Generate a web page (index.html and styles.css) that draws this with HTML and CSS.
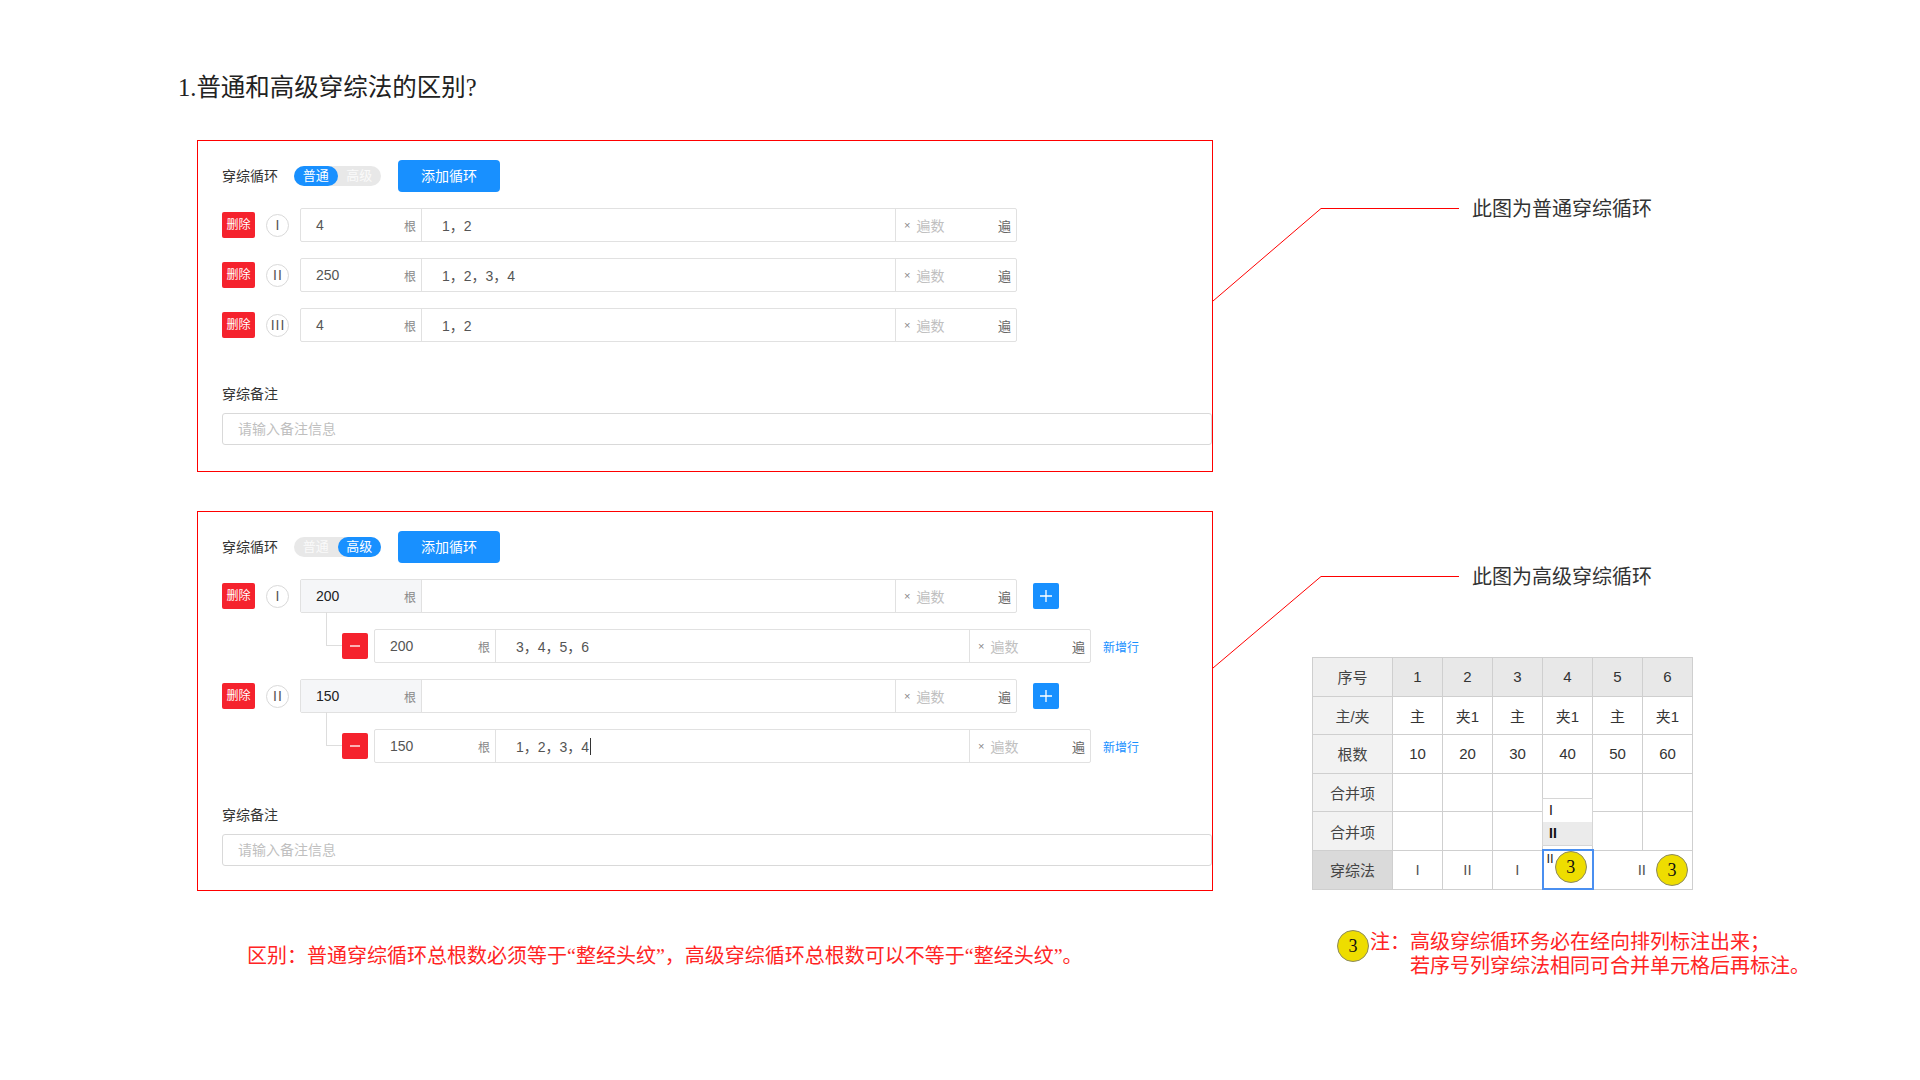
FILE: index.html
```html
<!DOCTYPE html>
<html lang="zh-CN">
<head>
    <meta charset="UTF-8">
    <meta name="viewport" content="width=device-width, initial-scale=1.0">
    <link rel="stylesheet" href="styles.css">
</head>
<body>
    <div class="page">
        <h1 class="title">1.普通和高级穿综法的区别?</h1>

        <div class="layout">
            <div class="left">
                <!-- 普通穿综循环 -->
                <section class="panel">
                    <div class="toolbar">
                        <span class="label">穿综循环</span>
                        <div class="switch">
                            <span class="on">普通</span>
                            <span>高级</span>
                        </div>
                        <div class="add-btn">添加循环</div>
                    </div>

                    <div class="row">
                        <div class="del">删除</div>
                        <div class="num">I</div>
                        <div class="field">
                            <div class="count"><span class="val">4</span><span class="unit">根</span></div>
                            <div class="seq">1，2</div>
                            <div class="times"><span class="x">×</span><span class="ph">遍数</span><span class="unit">遍</span></div>
                        </div>
                    </div>
                    <div class="row">
                        <div class="del">删除</div>
                        <div class="num">II</div>
                        <div class="field">
                            <div class="count"><span class="val">250</span><span class="unit">根</span></div>
                            <div class="seq">1，2，3，4</div>
                            <div class="times"><span class="x">×</span><span class="ph">遍数</span><span class="unit">遍</span></div>
                        </div>
                    </div>
                    <div class="row">
                        <div class="del">删除</div>
                        <div class="num">III</div>
                        <div class="field">
                            <div class="count"><span class="val">4</span><span class="unit">根</span></div>
                            <div class="seq">1，2</div>
                            <div class="times"><span class="x">×</span><span class="ph">遍数</span><span class="unit">遍</span></div>
                        </div>
                    </div>

                    <div class="remark-label">穿综备注</div>
                    <div class="remark">请输入备注信息</div>
                </section>

                <!-- 高级穿综循环 -->
                <section class="panel">
                    <div class="toolbar">
                        <span class="label">穿综循环</span>
                        <div class="switch">
                            <span>普通</span>
                            <span class="on">高级</span>
                        </div>
                        <div class="add-btn">添加循环</div>
                    </div>

                    <div class="row">
                        <div class="del">删除</div>
                        <div class="num">I</div>
                        <div class="field">
                            <div class="count main"><span class="val">200</span><span class="unit">根</span></div>
                            <div class="seq"></div>
                            <div class="times"><span class="x">×</span><span class="ph">遍数</span><span class="unit">遍</span></div>
                        </div>
                        <div class="plus">
                            <svg width="26" height="26" viewBox="0 0 26 26"><path d="M13 7v12M7 13h12" stroke="#fff" stroke-width="1.3" fill="none"/></svg>
                        </div>
                    </div>
                    <div class="row sub">
                        <div class="elbow"></div>
                        <div class="minus">
                            <svg width="26" height="26" viewBox="0 0 26 26"><path d="M8 13h10" stroke="#fff" stroke-width="1.3" fill="none"/></svg>
                        </div>
                        <div class="field">
                            <div class="count"><span class="val">200</span><span class="unit">根</span></div>
                            <div class="seq">3，4，5，6</div>
                            <div class="times"><span class="x">×</span><span class="ph">遍数</span><span class="unit">遍</span></div>
                        </div>
                        <span class="new-line">新增行</span>
                    </div>

                    <div class="row">
                        <div class="del">删除</div>
                        <div class="num">II</div>
                        <div class="field">
                            <div class="count main"><span class="val">150</span><span class="unit">根</span></div>
                            <div class="seq"></div>
                            <div class="times"><span class="x">×</span><span class="ph">遍数</span><span class="unit">遍</span></div>
                        </div>
                        <div class="plus">
                            <svg width="26" height="26" viewBox="0 0 26 26"><path d="M13 7v12M7 13h12" stroke="#fff" stroke-width="1.3" fill="none"/></svg>
                        </div>
                    </div>
                    <div class="row sub">
                        <div class="elbow"></div>
                        <div class="minus">
                            <svg width="26" height="26" viewBox="0 0 26 26"><path d="M8 13h10" stroke="#fff" stroke-width="1.3" fill="none"/></svg>
                        </div>
                        <div class="field">
                            <div class="count"><span class="val">150</span><span class="unit">根</span></div>
                            <div class="seq">1，2，3，4<span class="caret"></span></div>
                            <div class="times"><span class="x">×</span><span class="ph">遍数</span><span class="unit">遍</span></div>
                        </div>
                        <span class="new-line">新增行</span>
                    </div>

                    <div class="remark-label">穿综备注</div>
                    <div class="remark">请输入备注信息</div>
                </section>

                <p class="diff">区别：普通穿综循环总根数必须等于“整经头纹”，高级穿综循环总根数可以不等于“整经头纹”。</p>
            </div>

            <div class="right">
                <div class="callout first">此图为普通穿综循环</div>
                <div class="callout second">此图为高级穿综循环</div>

                <table class="grid">
                    <colgroup>
                        <col class="c-head">
                        <col class="c-num"><col class="c-num"><col class="c-num">
                        <col class="c-num"><col class="c-num"><col class="c-num">
                    </colgroup>
                    <tr class="hd">
                        <th class="rh top">序号</th>
                        <th>1</th><th>2</th><th>3</th><th>4</th><th>5</th><th>6</th>
                    </tr>
                    <tr>
                        <th class="rh">主/夹</th>
                        <td>主</td><td>夹1</td><td>主</td><td>夹1</td><td>主</td><td>夹1</td>
                    </tr>
                    <tr>
                        <th class="rh">根数</th>
                        <td>10</td><td>20</td><td>30</td><td>40</td><td>50</td><td>60</td>
                    </tr>
                    <tr>
                        <th class="rh">合并项</th>
                        <td></td><td></td><td></td>
                        <td class="has-menu">
                            <div class="menu">
                                <div class="opt">I</div>
                                <div class="opt cur">II</div>
                            </div>
                        </td>
                        <td></td><td></td>
                    </tr>
                    <tr>
                        <th class="rh">合并项</th>
                        <td></td><td></td><td></td><td></td><td></td><td></td>
                    </tr>
                    <tr>
                        <th class="rh dark">穿综法</th>
                        <td class="mark">I</td>
                        <td class="mark">II</td>
                        <td class="mark">I</td>
                        <td class="sel">
                            <div class="sel-inner"><span class="mark-sm">II</span><span class="badge">3</span></div>
                        </td>
                        <td colspan="2" class="merged">
                            <div class="merged-inner"><span class="mark">II</span><span class="badge">3</span></div>
                        </td>
                    </tr>
                </table>

                <div class="note">
                    <span class="badge">3</span>
                    <div class="note-text">
                        <p>注：高级穿综循环务必在经向排列标注出来；</p>
                        <p class="indent">若序号列穿综法相同可合并单元格后再标注。</p>
                    </div>
                </div>
            </div>
        </div>

        <!-- 引线 -->
        <svg class="leaders" width="1920" height="1080" viewBox="0 0 1920 1080">
            <polyline points="1213,301 1321,208.5 1459,208.5" fill="none" stroke="#ff0000" stroke-width="1"/>
            <polyline points="1213,668 1321,576.5 1459,576.5" fill="none" stroke="#ff0000" stroke-width="1"/>
        </svg>
    </div>
</body>
</html>
```

FILE: styles.css
```css
* {
    box-sizing: border-box;
}

body {
    margin: 0;
    background: #fff;
}

.page {
    position: relative;
    width: 1920px;
    height: 1080px;
    overflow: hidden;
    font-family: "Liberation Sans", "Noto Sans CJK SC", sans-serif;
    color: #333;
}

.title {
    margin: 0;
    padding: 72px 0 0 178px;
    font: normal 24.5px/31px "Liberation Serif", "Noto Sans CJK SC", serif;
    color: #222;
}

.layout {
    display: grid;
    grid-template-columns: 1016px 1fr;
    column-gap: 99px;
    margin-top: 37px;
    padding-left: 197px;
}

/* 面板 */
.panel {
    border: 1px solid #ff0000;
    padding: 19px 0 24px 24px;
    overflow: hidden;
}

.panel:first-child {
    padding-bottom: 26px;
}

.panel + .panel {
    margin-top: 39px;
}

.toolbar {
    display: flex;
    align-items: center;
    height: 32px;
}

.label {
    font-size: 14px;
    line-height: 20px;
    color: #333;
}

.switch {
    display: flex;
    width: 87px;
    height: 20px;
    margin-left: 16px;
    border-radius: 10px;
    background: #e8e8e8;
}

.switch span {
    width: 44px;
    font-size: 13px;
    line-height: 20px;
    text-align: center;
    color: #fafafa;
    border-radius: 10px;
}

.switch .on {
    background: #1890ff;
    color: #fff;
}

.add-btn {
    width: 102px;
    height: 32px;
    margin-left: 17px;
    border-radius: 4px;
    background: #1890ff;
    color: #fff;
    font-size: 14px;
    line-height: 32px;
    text-align: center;
}

/* 循环行 */
.row {
    display: flex;
    align-items: center;
    height: 34px;
    margin-top: 16px;
}

.del {
    width: 33px;
    height: 26px;
    border-radius: 2px;
    background: #f5222d;
    color: #fff;
    font-size: 12px;
    line-height: 26px;
    text-align: center;
}

.num {
    display: flex;
    align-items: center;
    justify-content: center;
    width: 23px;
    height: 23px;
    margin-left: 11px;
    border: 1px solid #d9d9d9;
    border-radius: 50%;
    font-size: 14px;
    color: #555;
    letter-spacing: 1px;
    padding-left: 1px;
}

.field {
    display: flex;
    width: 717px;
    height: 34px;
    margin-left: 11px;
    border: 1px solid #e1e1e1;
    border-radius: 2px;
}

.count {
    display: flex;
    align-items: center;
    width: 120px;
    padding: 0 5px 0 15px;
}

.count.main {
    background: #f5f6f8;
}

.count .val {
    flex: 1;
    font-size: 14px;
    color: #555;
}

.count.main .val {
    color: #222;
}

.count .unit {
    font-size: 12px;
    color: #888;
}

.seq {
    display: flex;
    align-items: center;
    flex: 1;
    padding-left: 20px;
    border-left: 1px solid #e1e1e1;
    font-size: 14px;
    color: #555;
}

.caret {
    display: inline-block;
    width: 1px;
    height: 17px;
    margin-left: 1px;
    background: #333;
}

.times {
    display: flex;
    align-items: center;
    width: 121px;
    padding: 0 5px 0 8px;
    border-left: 1px solid #e1e1e1;
}

.times .x {
    font-size: 11px;
    color: #888;
}

.times .ph {
    flex: 1;
    margin-left: 6px;
    font-size: 14px;
    color: #c0c0c0;
}

.times .unit {
    font-size: 13px;
    color: #666;
}

.plus,
.minus {
    width: 26px;
    height: 26px;
    border-radius: 2px;
}

.plus {
    margin-left: 16px;
    background: #1890ff;
}

.minus {
    background: #f5222d;
}

.plus svg,
.minus svg {
    display: block;
}

.sub {
    padding-left: 104px;
}

.sub .field {
    margin-left: 6px;
}

.elbow {
    align-self: flex-start;
    width: 16px;
    height: 34px;
    margin-top: -17px;
    border-left: 1px solid #ddd;
    border-bottom: 1px solid #ddd;
}

.new-line {
    margin-left: 12px;
    font-size: 12px;
    color: #1890ff;
}

.remark-label {
    margin-top: 42px;
    font-size: 14px;
    line-height: 20px;
    color: #333;
}

.remark {
    height: 32px;
    margin-top: 9px;
    padding-left: 15px;
    border: 1px solid #d9d9d9;
    border-radius: 3px;
    font-size: 14px;
    line-height: 30px;
    color: #bfbfbf;
}

.diff {
    margin: 53px 0 0 50px;
    font: 20px/24px "Liberation Serif", "Noto Sans CJK SC", serif;
    color: #ff2424;
}

/* 右侧说明 */
.callout {
    margin-left: 160px;
    font-size: 20px;
    line-height: 28px;
    color: #333;
}

.callout.first {
    margin-top: 55px;
}

.callout.second {
    margin-top: 340px;
}

.grid {
    margin-top: 66px;
    width: 380px;
    table-layout: fixed;
    border-collapse: collapse;
    font-size: 15px;
    color: #333;
}

.c-head {
    width: 80px;
}

.c-num {
    width: 50px;
}

.grid tr {
    height: 38.6px;
}

.grid th,
.grid td {
    padding: 0;
    border: 1px solid #cfcfcf;
    text-align: center;
    vertical-align: middle;
    font-weight: normal;
}

.grid .hd th {
    background: #e8e8e8;
}

.grid .rh {
    background: #f2f2f2;
    color: #444;
}

.grid .rh.top {
    background: #efefef;
}

.grid .rh.dark {
    background: #dadada;
}

.grid .mark {
    color: #555;
}

.has-menu {
    position: relative;
}

.menu {
    position: absolute;
    top: 24px;
    left: -1px;
    right: -1px;
    z-index: 1;
    border: 1px solid #d6d6d6;
    background: #fff;
}

.opt {
    height: 23px;
    padding-left: 6px;
    font-size: 14px;
    line-height: 23px;
    text-align: left;
    color: #111;
}

.opt.cur {
    background: #ebebeb;
    font-weight: bold;
}

.grid .sel {
    border: 2px solid #4a8ff0;
    vertical-align: top;
}

.sel-inner {
    display: flex;
    align-items: flex-start;
    padding: 0 0 0 3px;
}

.mark-sm {
    font-size: 13px;
    line-height: 16px;
    color: #222;
    margin-right: 1px;
}

.merged-inner {
    display: flex;
    align-items: center;
    justify-content: flex-end;
    gap: 10px;
    padding-right: 4px;
}

.badge {
    display: flex;
    align-items: center;
    justify-content: center;
    flex: none;
    width: 32px;
    height: 32px;
    border: 1px solid #8c8a60;
    border-radius: 50%;
    background: #eedd00;
    font: 18px/1 "Liberation Serif", serif;
    color: #111;
}

.note {
    display: flex;
    align-items: flex-start;
    margin: 40px 0 0 25px;
    font: 20px/24px "Liberation Serif", "Noto Sans CJK SC", serif;
    color: #ff2424;
}

.note .badge {
    margin-right: 1px;
}

.note-text p {
    margin: 0;
}

.note-text .indent {
    padding-left: 40px;
}

.leaders {
    position: absolute;
    top: 0;
    left: 0;
    pointer-events: none;
}
```
